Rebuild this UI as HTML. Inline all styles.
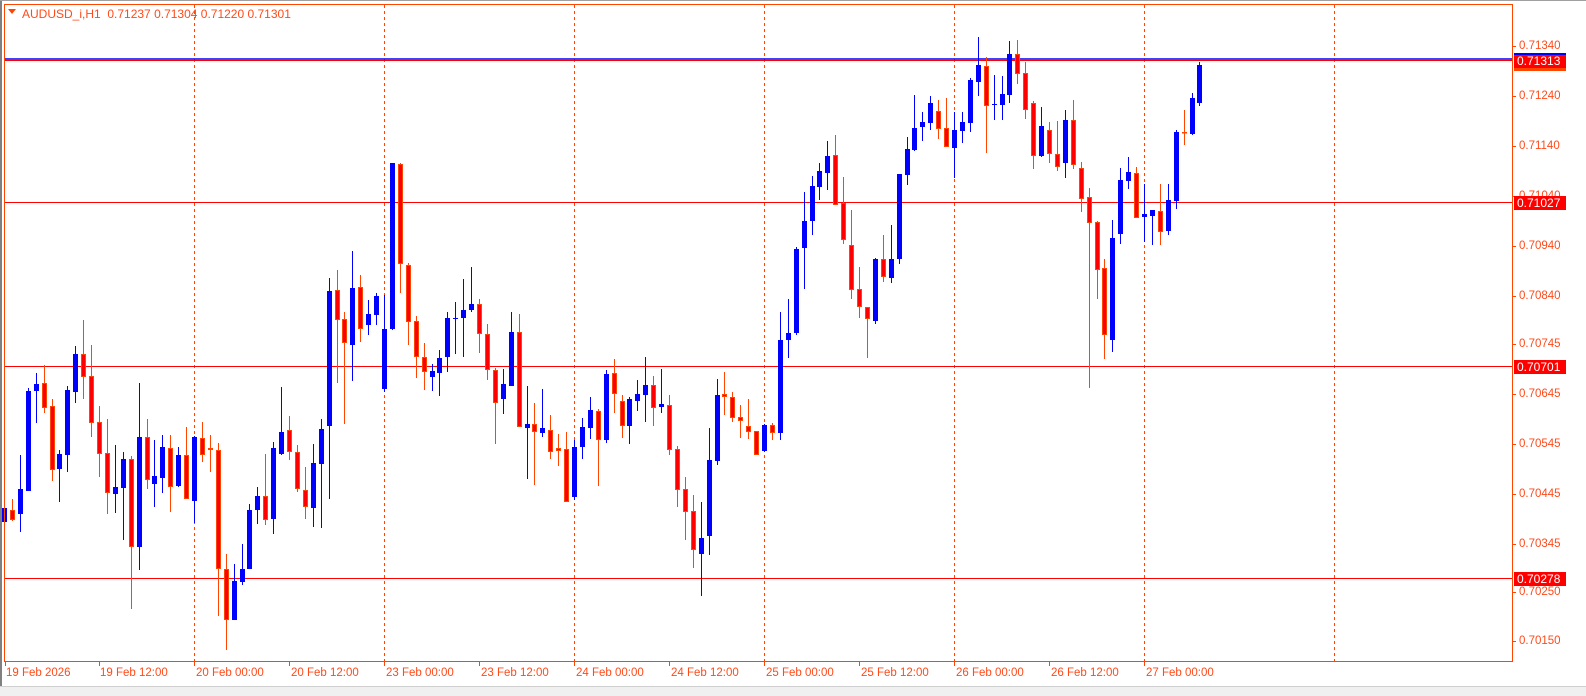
<!DOCTYPE html>
<html><head><meta charset="utf-8"><style>
html,body{margin:0;padding:0;background:#fff;}
body{width:1586px;height:696px;position:relative;overflow:hidden;font-family:"Liberation Sans",sans-serif;}
.t{position:absolute;font-size:11.5px;color:#ff4a1a;white-space:nowrap;line-height:12px;}
.pl{position:absolute;left:1514px;width:52px;height:14px;background:#ff0000;color:#fff;font-size:12px;line-height:14px;padding-left:3px;box-sizing:border-box;}
</style></head><body>
<svg id="s" width="1586" height="696" style="position:absolute;left:0;top:0" xmlns="http://www.w3.org/2000/svg">
<rect x="0" y="0" width="1586" height="696" fill="#fff"/>
<rect x="0" y="0" width="2" height="696" fill="#808080"/>
<rect x="0" y="0" width="1586" height="1" fill="#a0a0a0"/>
<rect x="0" y="686" width="1586" height="10" fill="#f0f0f0"/>
<rect x="0" y="686" width="1586" height="1" fill="#d0d0d0"/>
<g id="grid" stroke="#ff4500" stroke-width="1" stroke-dasharray="3,3"></g>
<line x1="4" y1="59" x2="1512" y2="59" stroke="#0000ff" stroke-width="1.5"/>
<line x1="4" y1="60.5" x2="1512" y2="60.5" stroke="#ff0000" stroke-width="1"/>
<line x1="4" y1="202.5" x2="1512" y2="202.5" stroke="#ff0000" stroke-width="1"/>
<line x1="4" y1="366.5" x2="1512" y2="366.5" stroke="#ff0000" stroke-width="1"/>
<line x1="4" y1="578.5" x2="1512" y2="578.5" stroke="#ff0000" stroke-width="1"/>
<g id="c"></g>
<rect x="4.5" y="4.5" width="1508" height="657" fill="none" stroke="#ff4500" stroke-width="1"/>
<g id="ticks" stroke="#ff4500" stroke-width="1"></g>
<polygon points="8,9 16,9 12,14" fill="#ff4500"/>
</svg>
<div class="t" style="left:22px;top:8px;font-size:12px">AUDUSD_i,H1&nbsp;&nbsp;0.71237 0.71304 0.71220 0.71301</div>
<div class="t" style="left:1519px;top:40px">0.71340</div>
<div class="t" style="left:1519px;top:90px">0.71240</div>
<div class="t" style="left:1519px;top:140px">0.71140</div>
<div class="t" style="left:1519px;top:190px">0.71040</div>
<div class="t" style="left:1519px;top:240px">0.70940</div>
<div class="t" style="left:1519px;top:290px">0.70840</div>
<div class="t" style="left:1519px;top:338px">0.70745</div>
<div class="t" style="left:1519px;top:388px">0.70645</div>
<div class="t" style="left:1519px;top:438px">0.70545</div>
<div class="t" style="left:1519px;top:488px">0.70445</div>
<div class="t" style="left:1519px;top:538px">0.70345</div>
<div class="t" style="left:1519px;top:586px">0.70250</div>
<div class="t" style="left:1519px;top:635px">0.70150</div>
<div class="pl" style="top:61px;background:#ff4500;height:10px"></div>
<div class="pl" style="top:54px;">0.71313</div>
<div class="pl" style="top:196px;">0.71027</div>
<div class="pl" style="top:360px;">0.70701</div>
<div class="pl" style="top:572px;">0.70278</div>
<div style="position:absolute;left:1514px;top:53px;width:52px;height:2px;background:#0000ff"></div>
<div class="t" style="left:6px;top:667px">19 Feb 2026</div>
<div class="t" style="left:100px;top:667px">19 Feb 12:00</div>
<div class="t" style="left:196px;top:667px">20 Feb 00:00</div>
<div class="t" style="left:291px;top:667px">20 Feb 12:00</div>
<div class="t" style="left:386px;top:667px">23 Feb 00:00</div>
<div class="t" style="left:481px;top:667px">23 Feb 12:00</div>
<div class="t" style="left:576px;top:667px">24 Feb 00:00</div>
<div class="t" style="left:671px;top:667px">24 Feb 12:00</div>
<div class="t" style="left:766px;top:667px">25 Feb 00:00</div>
<div class="t" style="left:861px;top:667px">25 Feb 12:00</div>
<div class="t" style="left:956px;top:667px">26 Feb 00:00</div>
<div class="t" style="left:1051px;top:667px">26 Feb 12:00</div>
<div class="t" style="left:1146px;top:667px">27 Feb 00:00</div>
<script>
var D=`B 503 542 508 522
R 499 521 510 520
B 455 532 489 514
B 388 491 391 491
B 373 423 384 391
R 365 413 383 408
R 399 481 406 470
B 450 502 454 469
B 386 472 390 455
B 346 403 354 392
R 320 399 354 377
R 345 437 376 423
R 406 477 422 454
R 419 514 453 493
B 445 513 487 494
B 452 540 459 488
R 456 609 459 547
B 383 570 437 547
R 419 489 437 480
B 440 507 476 484
B 435 493 447 478
R 435 512 448 487
B 447 487 455 486
R 427 499 455 499
B 436 523 437 501
R 422 462 438 455
R 435 472 448 450
R 443 616 450 569
R 554 650 569 620
B 564 620 581 620
B 544 585 569 582
B 504 569 510 569
B 487 524 496 510
R 454 525 496 520
B 442 534 448 519
B 387 455 432 454
R 416 460 430 452
R 445 492 452 489
R 467 519 490 507
B 444 527 463 508
B 419 528 429 464
B 278 499 291 426
R 270 383 290 320
R 312 424 319 343
B 251 381 288 345
R 275 342 287 329
B 300 335 314 325
B 293 325 296 315
B 295 392 329 389
B 163 330 163 329
R 163 293 164 264
R 263 345 265 322
R 316 378 321 357
R 343 390 357 372
B 364 391 371 377
B 350 396 358 373
B 312 372 318 357
B 302 354 318 319
B 279 357 310 318
B 267 312 304 310
R 299 353 304 334
R 324 380 334 370
R 368 444 370 403
B 369 414 384 399
B 312 386 332 386
R 314 427 332 427
B 386 479 424 428
R 403 485 424 432
B 389 437 428 433
R 415 459 430 452
R 434 466 448 451
R 432 502 449 502
B 440 500 447 497
B 418 459 427 447
B 397 439 410 428
R 409 486 411 440
B 370 443 374 440
R 359 413 373 394
R 395 438 401 426
B 397 444 399 426
B 380 411 394 401
B 357 422 385 395
R 376 426 385 408
B 369 413 404 407
R 395 455 405 450
R 446 507 449 490
R 477 540 489 512
R 495 568 511 550
B 502 596 538 554
B 428 555 460 536
B 379 465 395 461
R 372 415 394 397
R 392 422 397 418
R 405 438 417 421
R 399 439 426 432
R 431 455 431 455
B 424 452 425 451
R 423 440 425 433
B 312 440 340 433
B 299 358 333 340
B 247 335 249 333
B 192 289 221 248
B 176 235 186 221
B 163 200 171 187
B 141 190 156 173
R 135 205 155 205
R 177 244 203 240
R 210 299 245 290
R 267 318 289 307
R 307 358 307 319
B 258 324 259 321
R 235 282 259 277
B 225 283 259 278
B 174 264 174 259
B 137 185 149 175
B 95 151 128 150
B 112 141 122 127
B 96 130 103 123
R 100 139 111 129
R 98 147 128 147
B 112 178 130 148
B 112 143 122 131
B 78 132 80 123
B 37 96 65 82
R 57 153 66 106
B 75 120 104 105
B 76 120 94 105
B 41 103 54 95
R 40 84 54 74
R 62 119 73 110
R 101 169 103 156
B 107 157 126 156
R 122 163 130 154
R 121 171 154 167
B 110 178 120 163
R 100 169 120 165
R 162 212 168 199
R 188 388 197 223
R 221 299 222 270
R 259 359 268 335
B 220 352 238 340
B 168 244 180 234
B 157 189 172 181
R 167 218 173 218
B 184 242 214 217
B 210 245 210 216
R 184 245 211 232
B 184 235 200 231
B 130 209 132 201
R 110 145 132 133
B 93 135 98 134
B 62 106 65 103`;
var g=document.getElementById("c"),h="";
D.split("\n").forEach(function(l,i){var p=l.trim().split(/\s+/),t=p[0],hi=+p[1],lo=+p[2],a=+p[3],b=+p[4];
var x=Math.round(4+i*7.917);if(b-a<1)b=a+1;
var col=t=="B"?"#0000ff":"#ff4500";
h+='<line x1="'+(x+0.5)+'" y1="'+hi+'" x2="'+(x+0.5)+'" y2="'+lo+'" stroke="'+col+'" stroke-width="1"/>';
if(t=="B")h+='<rect x="'+(x-2)+'" y="'+a+'" width="5" height="'+(b-a)+'" fill="#0000ff"/>';
else h+='<rect x="'+(x-1.5)+'" y="'+(a+0.5)+'" width="4" height="'+Math.max(b-a-1,0.5)+'" fill="#ff0000" stroke="#ff4500" stroke-width="1"/>';
});
g.innerHTML=h;
var gr="";[194,384,574,764,954,1144,1334].forEach(function(x){gr+='<line x1="'+(x+0.5)+'" y1="5" x2="'+(x+0.5)+'" y2="661"/>';});
document.getElementById("grid").innerHTML=gr;
var tk="";[5,99,194,289,384,479,574,669,764,859,954,1049,1144].forEach(function(x){tk+='<line x1="'+(x+0.5)+'" y1="661" x2="'+(x+0.5)+'" y2="666"/>';});
[46,96,146,196,246,296,344,394,444,494,544,592,641].forEach(function(y){tk+='<line x1="1512" y1="'+(y+0.5)+'" x2="1516" y2="'+(y+0.5)+'"/>';});
document.getElementById("ticks").innerHTML=tk;
</script>
</body></html>
